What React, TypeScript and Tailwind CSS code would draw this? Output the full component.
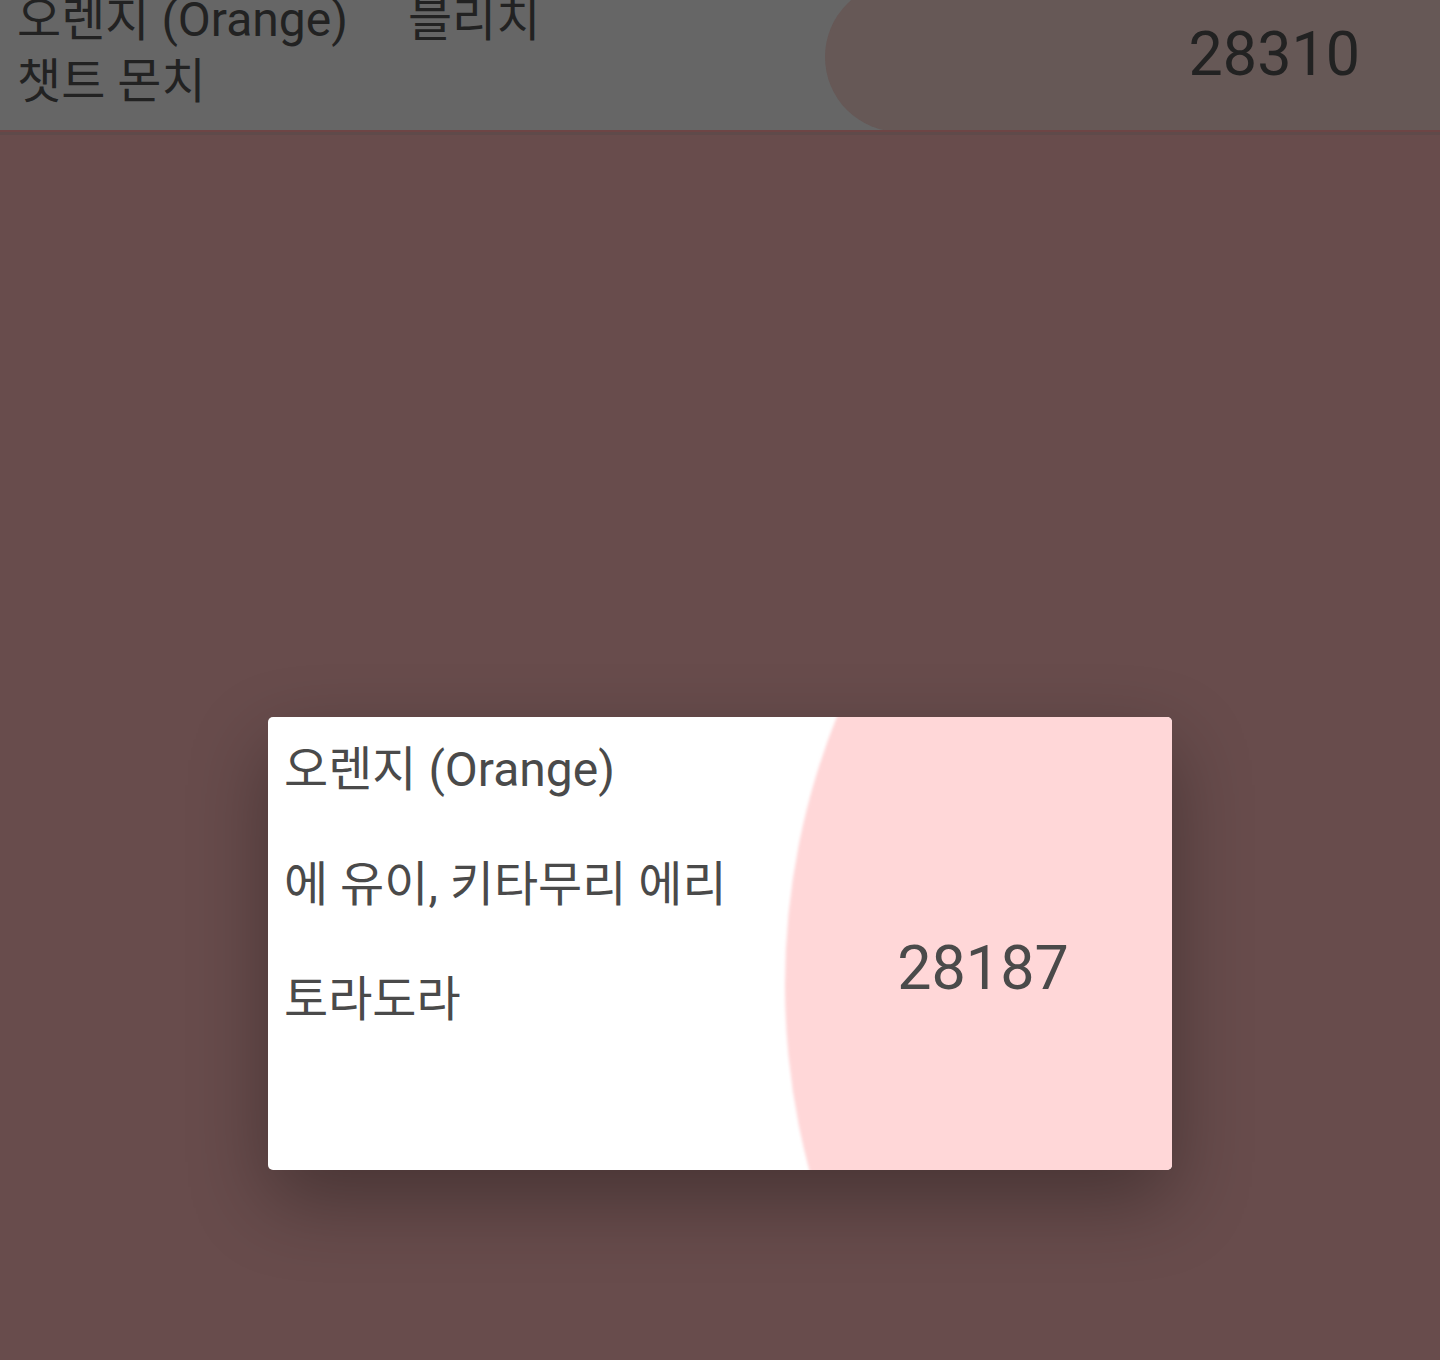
export default function App(): JSX.Element {
    return (
        <div
            className="w-full min-h-[1360px] bg-[#684c4c] text-[48px]"
            style={{ fontFamily: "Roboto, 'Noto Sans CJK KR', sans-serif" }}
        >
            {/* dimmed list row behind the dialog */}
            <div className="relative h-[132px] overflow-hidden border-b-2 border-[#6d4545] bg-[#666666]">
                <div className="absolute left-[825px] top-[-18px] h-[150px] w-[900px] rounded-full bg-[#665856] blur-[0.6px]" />

                <div className="relative flex justify-between">
                    <div className="-mt-[11px] pl-[17px] leading-[62px] text-[#222222]">
                        <div className="flex gap-[60px]">
                            <span>오렌지 (Orange)</span>
                            <span>블리치</span>
                        </div>
                        <div>챗트 몬치</div>
                    </div>
                    <div className="mt-[24px] pr-[80px] text-[61px] leading-[61px] text-[#222222]">28310</div>
                </div>
            </div>
            <div className="h-[3px] bg-[#5f4a4a]" />

            <div className="pt-[582px]">
                <div className="relative mx-auto flex h-[453px] w-[904px] overflow-hidden rounded-[5px] bg-white shadow-[0_30px_80px_rgba(0,0,0,0.32)]">
                    <div className="absolute left-[517px] top-[-452px] h-[1440px] w-[1440px] rounded-full bg-[#ffd7d8] blur-[1.5px]" />

                    <div className="relative flex flex-1 flex-col gap-[63px] pl-[16px] pt-[27px] leading-[52px] text-[#4a4a4a]">
                        <p>오렌지 (Orange)</p>
                        <p>에 유이, 키타무리 에리</p>
                        <p>토라도라</p>
                    </div>

                    <div className="relative flex w-[378px] items-center justify-center pt-[49px] text-[61px] leading-[61px] text-[#4a4a4a]">
                        28187
                    </div>
                </div>
            </div>
        </div>
    );
}
